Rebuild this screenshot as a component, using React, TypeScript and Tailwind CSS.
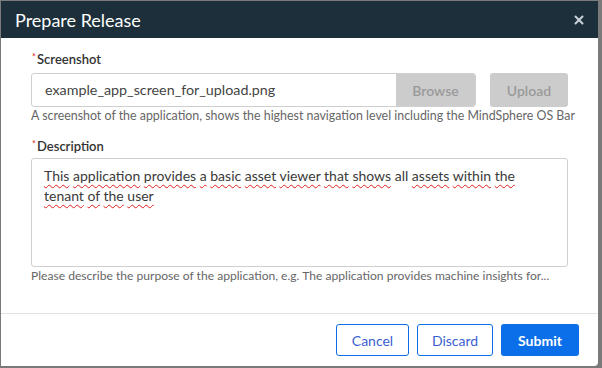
import { X } from 'lucide-react'

const FONT = "font-['Lato','Noto_Sans',sans-serif]"

const LINE1: [string, boolean][] = [
  ['This', true], ['application', true], ['provides', true], ['a', true], ['basic', true],
  ['asset', true], ['viewer', true], ['that', true], ['shows', true], ['all', false],
  ['assets', true], ['within', true], ['the', true],
]
const LINE2: [string, boolean][] = [
  ['tenant', true], ['of', true], ['the', true], ['user', true],
]

function Words({ words }: { words: [string, boolean][] }) {
  return (
    <div className="whitespace-nowrap">
      {words.map(([w, bad], i) => (
        <span key={i}>
          <span className={bad ? 'underline decoration-wavy decoration-[#e02020] decoration-[1px] underline-offset-[3px]' : ''}>{w}</span>
          {i < words.length - 1 ? ' ' : ''}
        </span>
      ))}
    </div>
  )
}

function Label({ text }: { text: string }) {
  return (
    <div className="text-[13px] font-semibold text-[#333] leading-[13px] pl-[6px] relative">
      <span className="absolute left-[1px] -top-[3px] text-[9px] text-[#e0352b]">*</span>
      {text}
    </div>
  )
}

export default function App() {
  return (
    <div className={`w-[602px] h-[368px] bg-[#7a7a7a] pt-[1px] pl-[1px] pr-[4px] pb-[2px] ${FONT}`}>
      <div className="w-full h-full bg-white rounded-br-[4px] flex flex-col overflow-hidden">
        {/* header */}
        <div className="h-[37px] bg-[#1c2f3b] flex items-center justify-between pl-[14px] pr-[12px] flex-shrink-0">
          <span className="text-white text-[18px] leading-none">Prepare Release</span>
          <X className="w-[14px] h-[14px] text-[#c8d0d6]" strokeWidth={3.5} />
        </div>

        {/* body */}
        <div className="flex-1 pl-[30px] pt-[15px]">
          <div className="w-[537px]">
            <Label text="Screenshot" />
            <div className="flex gap-[14px] mt-[7px]">
              <div className="flex flex-1 h-[34px] border border-[#cfcfcf] rounded-[3px] overflow-hidden">
                <div className="flex-1 flex items-center pl-[13px] text-[14.3px] text-[#444]">
                  example_app_screen_for_upload.png
                </div>
                <div className="w-[79px] bg-[#cccccc] flex items-center justify-center text-[14px] font-semibold text-[#9a9a9a]">
                  Browse
                </div>
              </div>
              <div className="w-[78px] h-[34px] rounded-[3px] bg-[#cccccc] flex items-center justify-center text-[14px] font-semibold text-[#9a9a9a]">
                Upload
              </div>
            </div>
            <div className="text-[12.4px] leading-[16px] text-[#666] mt-[1px] whitespace-nowrap">
              A screenshot of the application, shows the highest navigation level including the MindSphere OS Bar
            </div>

            <div className="mt-[16px]">
              <Label text="Description" />
            </div>
            <div className="mt-[5px] h-[109px] border border-[#cfcfcf] rounded-[3px] px-[12px] pt-[7px] text-[14px] leading-[20px] text-[#3a3a3a]">
              <Words words={LINE1} />
              <Words words={LINE2} />
            </div>
            <div className="text-[12.1px] leading-[16px] text-[#666] mt-[1px] whitespace-nowrap">
              Please describe the purpose of the application, e.g. The application provides machine insights for...
            </div>
          </div>
        </div>

        {/* footer */}
        <div className="h-[53px] border-t border-[#e2e2e2] flex items-center justify-end gap-[8px] pr-[19px] flex-shrink-0">
          <button className="w-[73px] h-[32px] rounded-[3px] border border-[#0c6fe6] text-[#3b5fd1] text-[14px]">Cancel</button>
          <button className="w-[76px] h-[32px] rounded-[3px] border border-[#0c6fe6] text-[#3b5fd1] text-[14px]">Discard</button>
          <button className="w-[78px] h-[32px] rounded-[3px] bg-[#0a6fe8] text-white text-[14px] font-bold">Submit</button>
        </div>
      </div>
    </div>
  )
}
